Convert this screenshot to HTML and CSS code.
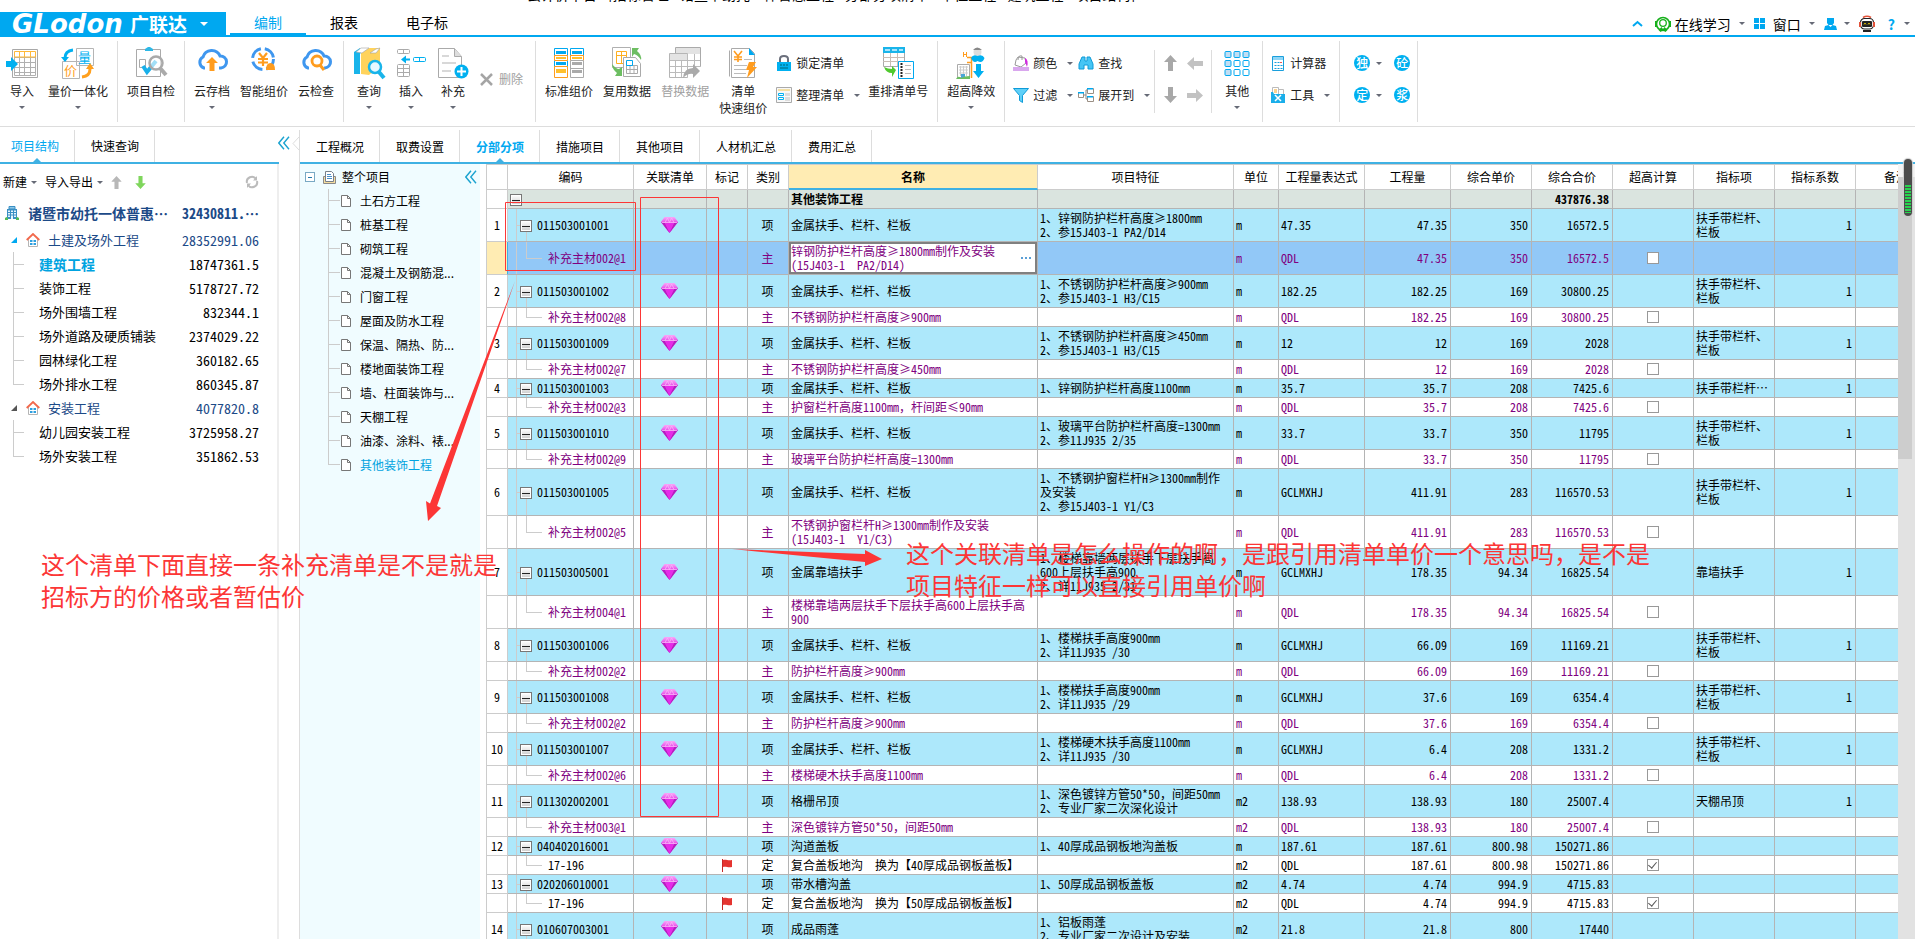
FILE: index.html
```html
<!DOCTYPE html>
<html lang="zh-CN">
<head>
<meta charset="utf-8">
<title>Glodon 广联达 - 分部分项</title>
<link rel="stylesheet" href="styles.css">
</head>
<body>
<svg class="sprite" aria-hidden="true">
<defs>
<linearGradient id="gemfill" x1="0" y1="0" x2="0" y2="1"><stop offset="0" stop-color="#f9a8f9"/><stop offset=".4" stop-color="#e63fe6"/><stop offset="1" stop-color="#dc20e6"/></linearGradient>
<symbol id="gem" viewBox="0 0 17 16"><path d="M3.500 0h10L17 5 8.500 16 0 5z" fill="url(#gemfill)"/><path d="M0 5l4 1 4.500 10zM17 5l-4 1-4.500 10z" fill="#b51fbe"/><path d="M4 6h9l-4.500 9z" fill="#e62be8"/><path d="M1 5.500h15M4 5.500L6.500 1 8.500 5.500 10.500 1 13 5.500" stroke="#f7b4f7" stroke-width=".8" fill="none"/></symbol>
<symbol id="flag" viewBox="0 0 10 13"><path d="M.5 0v13" stroke="#c62828"/><path d="M1 1c3-1 5 1 9 0v7c-4 1-6-1-9 0z" fill="#e53430"/></symbol>
<symbol id="page" viewBox="0 0 10 12"><path d="M.5.5h6l3 3v8h-9z" fill="#fff" stroke="#777"/><path d="M6.500.5v3h3" fill="none" stroke="#777"/></symbol>
<symbol id="house" viewBox="0 0 14 14"><path d="M2.500 6v7.500h9V6" fill="#fff" stroke="#b5b5b5"/><path d="M.7 7L7 1l6.300 6" fill="none" stroke="#f2694c" stroke-width="1.800"/><path d="M4 7h2.500v2H4zM7.500 7H10v2H7.500zM4 10h2.500v2H4zM7.500 10H10v2H7.500z" fill="#2d9fdf"/></symbol>
<symbol id="chev" viewBox="0 0 12 14"><path d="M6 .7L.8 7 6 13.300M11 .7L5.800 7 11 13.300" fill="none" stroke="#1ba3d0" stroke-width="1.400"/></symbol>
<symbol id="up" viewBox="0 0 13 16"><path d="M6.500 0L13 7H9v9H4V7H0z" fill="currentColor"/></symbol>
</defs>
</svg>

<header class="titlebar">
  <p class="doc-title">云计价平台 - [招标管理 - 诸暨市幼托一体普惠工程 - 分部分项清单 - 单位工程 - 建筑工程 - 项目结构]</p>
  <div class="menu">
    <button class="brand"><span class="brand-en">GLodon</span><span class="brand-cn">广联达</span><i class="caret"></i></button>
    <nav class="main-nav"><a href="#" class="on">编制</a><a href="#">报表</a><a href="#">电子标</a></nav>
    <div class="account">
      <button class="collapse" aria-label="收起"><svg width="11" height="7"><path d="M1 6l4.500-4L10 6" fill="none" stroke="#00a8f0" stroke-width="2"/></svg></button>
      <button class="study"><svg width="16" height="16" viewBox="0 0 16 16"><circle cx="8" cy="8" r="6.500" fill="none" stroke="#17b01b" stroke-width="1.600"/><path d="M0 5h2v6H0zM14 5h2v6h-2z" fill="#17b01b"/><circle cx="8" cy="7" r="3.300" fill="#fff" stroke="#17b01b" stroke-width="1.300"/><path d="M3.500 14l3-3 1.500 2 1.500-2 3 3-2 2-2.500-1.500L5.500 16z" fill="#17b01b"/></svg>在线学习<i class="caret"></i></button>
      <button class="win"><svg width="11" height="11"><path d="M0 0h5v5H0zM6 0h5v5H6zM0 6h5v5H0zM6 6h5v5H6z" fill="#00a8f0"/></svg>窗口<i class="caret"></i></button>
      <button class="user" aria-label="用户"><svg width="13" height="12" viewBox="0 0 13 12"><path d="M3 0h7v5L8.500 7h-4L3 5zM0 12l1-4 3.500-1L6.500 9l2-2L12 8l1 4z" fill="#00a8f0"/></svg><i class="caret"></i></button>
      <button class="robot" aria-label="助手"><svg width="16" height="16" viewBox="0 0 16 16"><path d="M4 1.500Q8-1 12 1.500" stroke="#e2533a" stroke-width="1.500" fill="none"/><rect x="1.500" y="2.500" width="13" height="10.500" rx="4" fill="#fff" stroke="#222" stroke-width="1.200"/><path d="M0 6h2v5H0zM14 6h2v5h-2z" fill="#e2533a"/><rect x="3" y="5" width="10" height="6" rx="1" fill="#222"/><path d="M5 8.500L6 7l1 1.500M9 8.500L10 7l1 1.500" stroke="#fd0" fill="none" stroke-width=".8"/><path d="M4 15h8" stroke="#222" stroke-width="2"/></svg></button>
      <button class="help" aria-label="帮助">?<i class="caret"></i></button>
    </div>
  </div>
</header>

<section class="ribbon" aria-label="工具栏">
  <div class="group g1">
    <button class="big"><svg width="32" height="32" viewBox="0 0 32 32"><path d="M6.500 2.500h25v28h-25z" fill="#fff" stroke="#a8a8a8"/><path d="M9 10.500h21M9 15.500h21M9 20.500h21M9 25.500h21M13.500 5v23M18.500 5v23M24.500 5v23M8.500 10v18.500h21V10" fill="none" stroke="#b0b0b0"/><path d="M8.500 10V4.500h21V10M8.500 10h21M13.500 5v5M18.500 5v5M24.500 5v5" fill="none" stroke="#ffb93a"/><path d="M0 14h5v-4l7 7-7 7v-4H0z" fill="#00b0f0"/></svg><span>导入</span><i class="caret"></i></button>
    <button class="big"><svg width="32" height="32" viewBox="0 0 32 32"><path d="M14.500 1.500h17v17h-17zM.5 14.500h17v17H.5z" fill="#fff" stroke="#b5b5b5"/><text x="16" y="15" class="ico-a">量</text><text x="2" y="28" class="ico-b">价</text><path d="M11 3Q3 4 3 11" fill="none" stroke="#00b0f0" stroke-width="3"/><path d="M-1 10h8l-4 5z" fill="#00b0f0"/><path d="M20 30q8-1 8-8" fill="none" stroke="#ffa01e" stroke-width="3"/><path d="M24 22l4-6 4 6z" fill="#ffa01e"/></svg><span>量价一体化</span><i class="caret"></i></button>
  </div>
  <div class="group">
    <button class="big"><svg width="32" height="32" viewBox="0 0 32 32"><path d="M1.500 2.500h24v27h-24z" fill="#fff" stroke="#aaa"/><path d="M10 4V2l3-2h2l3 2v2z" fill="#2db8e6"/><path d="M4.500 12.500h6v8h-6z" fill="#fff" stroke="#aaa"/><path d="M8 19l4 6 9-11" fill="none" stroke="#18b0ea" stroke-width="4"/><circle cx="21" cy="16" r="6.500" fill="#fff" fill-opacity=".6" stroke="#aaa" stroke-width="2.500"/><path d="M25 21l6 7" stroke="#aaa" stroke-width="4"/></svg><span>项目自检</span></button>
  </div>
  <div class="group">
    <button class="big"><svg width="32" height="32" viewBox="0 0 32 32"><path d="M9 21H8a6 6 0 0 1-1-11 9 9 0 0 1 17-1 6 6 0 0 1 1 12h-2" fill="none" stroke="#3f97ef" stroke-width="3"/><path d="M16 10l6 6h-3.500v8h-5v-8H10z" fill="#ff9c1e"/></svg><span>云存档</span><i class="caret"></i></button>
    <button class="big"><svg width="32" height="32" viewBox="0 0 32 32"><circle cx="15" cy="12" r="10.500" fill="none" stroke="#3f97ef" stroke-width="3" stroke-dasharray="13 4"/><path d="M11 6l4 5 4-5M15 11v8M10 12h10M10 15.500h10" fill="none" stroke="#ff9c1e" stroke-width="2.200"/><path d="M18 23q0-7 4.500-7t4.500 7z" fill="#ff9c1e"/></svg><span>智能组价</span></button>
    <button class="big"><svg width="32" height="32" viewBox="0 0 32 32"><path d="M9 21H8a6 6 0 0 1-1-11 9 9 0 0 1 17-1 6 6 0 0 1 1 12h-1" fill="none" stroke="#3f97ef" stroke-width="3"/><circle cx="17" cy="14" r="5" fill="#fff" stroke="#ff9c1e" stroke-width="2.800"/><path d="M20 18l4 5" stroke="#ff9c1e" stroke-width="3"/></svg><span>云检查</span></button>
  </div>
  <div class="group g4">
    <button class="big"><svg width="32" height="32" viewBox="0 0 32 32"><path d="M1 5l6-4 2 3-2 3v20H1z" fill="#19b4ea"/><path d="M8 6l8-5h11v24q-9 0-11 3l-8-1z" fill="#ffd35c"/><path d="M3 5l5-4h8l-7 5zM17 6l6-4 4-1-4 5z" fill="#fff" stroke="#a3a3a3" stroke-width=".6"/><circle cx="22" cy="20" r="6" fill="#e8f8ff" stroke="#19b4ea" stroke-width="2.500"/><path d="M26 25l5 6" stroke="#19b4ea" stroke-width="4"/></svg><span>查询</span><i class="caret"></i></button>
    <button class="big"><svg width="32" height="32" viewBox="0 0 32 32"><g fill="#fff" stroke="#aaa"><rect x="2.500" y="2.500" width="12" height="4" rx="1"/><path d="M8.500 3v3"/><rect x="2.500" y="17.500" width="12" height="12" rx="1"/><path d="M8.500 18v11M3 21.500h11M3 25.500h11"/></g><path d="M6 12.500l5-4v3h4v2h-4v3z" fill="#00b0f0"/><rect x="18.500" y="10.500" width="12" height="4" rx="1" fill="#fff" stroke="#00b0f0"/><path d="M24.500 11v3" stroke="#00b0f0"/></svg><span>插入</span><i class="caret"></i></button>
    <button class="big"><svg width="32" height="32" viewBox="0 0 32 32"><path d="M1.500 1.500h16l7 8v21h-23z" fill="#fff" stroke="#aaa"/><path d="M17.500 1.500v8h7" fill="#ddd" stroke="#aaa"/><path d="M5 9h7M5 16h14M5 24h9" stroke="#ccc" stroke-width="1.500"/><circle cx="24.500" cy="24.500" r="7" fill="#00b0f0"/><path d="M20 24.500h9M24.500 20v9" stroke="#fff" stroke-width="2"/></svg><span>补充</span><i class="caret"></i></button>
    <button class="small dim"><svg width="13" height="13" viewBox="0 0 13 13"><path d="M1 1l11 11M12 1L1 12" stroke="#a5a5a5" stroke-width="2.500"/></svg>删除</button>
  </div>
  <div class="group">
    <button class="big"><svg width="32" height="32" viewBox="0 0 32 32"><g fill="#fff"><path d="M1.500 1.500h13v10h-13zM17.500 1.500h13v10h-13zM1.500 13.500h13v8h-13z" stroke="#00a8f0"/><path d="M1.500 8.500h13v5h-13zM17.500 8.500h13v5h-13zM1.500 19.500h13v11h-13z" stroke="#ff9c1e"/><path d="M17.500 13.500h13v17h-13zM17.500 21.500h13" stroke="#aaa"/></g><path d="M3 4h10v3H3zM19 4h10v3H19zM3 15h10v3H3z" fill="#00a8f0"/><path d="M3 10h10v2H3zM19 10h10v2H19zM3 22h10v4H3z" fill="#ffc02e"/><path d="M19 15h10v3H19zM19 23h10v3H19z" fill="#aaa"/></svg><span>标准组价</span></button>
    <button class="big"><svg width="32" height="32" viewBox="0 0 32 32"><path d="M1.500.5h18v20h-18z" fill="#fff" stroke="#b0b0b0"/><path d="M5.500 4.500h10v12h-10zM5.500 8.500h10M10.500 4.500v12" fill="none" stroke="#ffb020"/><path d="M12.500 10.500h12l5 6v13h-17z" fill="#fff" stroke="#aaa"/><path d="M15.500 18.500h11v8h-11zM15.500 22.500h11M19 18.500v8M23 18.500v8" fill="none" stroke="#aaa"/><path d="M15.500 13.500h6v5h-6z" fill="none" stroke="#00a8f0"/><path d="M21 1h7l-2 3q5 4 4 9-3-5-7-6l-2 3zM11 29H4l2-3q-5-4-5-9 4 5 7 5l3-2z" fill="#6dbe62"/></svg><span>复用数据</span></button>
    <button class="big dim"><svg width="32" height="32" viewBox="0 0 32 32"><path d="M6.500.5h25v19h-25z" fill="#fff" stroke="#aaa"/><path d="M7 1h24v6H7z" fill="#e3e3e3"/><path d="M.5 6.500h18v24H.5z" fill="#fff" stroke="#b5b5b5"/><path d="M1 7h17v6H1z" fill="#e3e3e3"/><path d="M1 13.500h30M1 19.500h30M1 25.500h17M6.500 13v17M12.500 13v17M18.500 7v23M25.500 7v13" stroke="#bbb"/><path d="M14 31q1-10 10-10v-4l7 7-7 7v-4q-5-1-10 4z" fill="#aaa"/></svg><span>替换数据</span></button>
    <button class="big"><svg width="32" height="32" viewBox="0 0 32 32"><path d="M2.500 3.500v26M4.500 1.500h18l5 5v24h-23z" fill="#fff" stroke="#aaa"/><path d="M22 1l6 7h-6z" fill="#00a8f0"/><path d="M7 4l4 5 4-5M11 9v6M7 10h8M7 12.500h8" fill="none" stroke="#ff9c1e" stroke-width="1.600"/><path d="M17 12.500h8M7 18.500h13M7 22.500h12M7 26.500h12" stroke="#bbb"/><path d="M22 15h7l-3 5h4L20 31l2-8h-3z" fill="#ff9c1e"/></svg><span>清单<br>快速组价</span></button>
    <div class="stack tight">
      <button class="small"><svg width="16" height="16" viewBox="0 0 16 16"><path d="M4 8V4q0-3 4-3t4 3v4" fill="none" stroke="#6b6f7c" stroke-width="2"/><path d="M1 7h14v9H1z" fill="#00b0f0"/><path d="M4 10h2M7 10h2M10 10h2M4 13h8" stroke="#067" /></svg>锁定清单</button>
      <button class="small"><svg width="16" height="16" viewBox="0 0 16 16"><path d="M.5.5h15v15H.5z" fill="#f8f8f8" stroke="#aaa"/><path d="M2 2h12v2H2z" fill="#f2dfa5"/><path d="M2.500 6.500h5v2h-5zM2.500 10.500h5v2h-5z" fill="#fff" stroke="#00b0f0"/><path d="M9 6h5v3H9zM9 10h5v4H9z" fill="#ddd"/></svg>整理清单<i class="caret"></i></button>
    </div>
    <button class="big"><svg width="32" height="32" viewBox="0 0 32 32"><path d="M1.500.5h21v19h-21z" fill="#fff" stroke="#aaa"/><path d="M1 0h22v6H1z" fill="#19b4ea"/><path d="M3 2h5v2H3zM10 2h5v2h-5zM17 2h4v2h-4z" fill="#a9e3fa"/><path d="M1 10.500h21M1 14.500h21M8.500 6v13M15.500 6v13" stroke="#c9bdb5"/><path d="M2 20q2 6 8 6v4l4-7-4-4v3q-4 0-8-2z" fill="#4fc92e"/><path d="M16.500 14.500h15v17h-15z" fill="#fff" stroke="#00a8f0"/><path d="M19.500 16v14" stroke="#222" stroke-width="2" stroke-dasharray="2 1"/><path d="M23 18.500h6M23 22.500h6M23 26.500h6" stroke="#bbb"/></svg><span>重排清单号</span></button>
  </div>
  <div class="group">
    <button class="big"><svg width="32" height="32" viewBox="0 0 32 32"><path d="M2.500 17.500h12v13h-12z" fill="#fff" stroke="#aaa"/><path d="M4 20h9M4 23h9M4 26h9M5.500 19v10M8.500 19v10M11.500 19v10" stroke="#ccc"/><path d="M6 27h4v4H6z" fill="#4aa5d8"/><path d="M1 32q2-4 5-1 3-2 9-2v3z" fill="#6dbe62"/><path d="M16.500 10v21M12 10.500h5M12 15.500h5" stroke="#ff9c1e" stroke-width="1.500"/><path d="M8.500 5v5M11.500 5v5M8.500 7.500h3" stroke="#ff9c1e"/><circle cx="22.500" cy="5" r="4" fill="#ddd"/><path d="M18 3q4-5 9 0z" fill="#888"/><path d="M16 11q2-4 6.500-2 5-2 7 2-2 6-7 3-4 3-6.500-3zM21 17h5v7h3l-5.500 7L18 24h3z" fill="#00b0f0"/></svg><span>超高降效</span><i class="caret"></i></button>
  </div>
  <div class="group short g7">
    <div class="stack">
      <button class="small"><svg width="16" height="16" viewBox="0 0 16 16"><path d="M5 2l7 1 1 5-5 4-6-2 1-5z" fill="#fff" stroke="#999"/><path d="M5 5Q5 0 9 1v4" fill="none" stroke="#999"/><path d="M12 3q4 2 2 9l-2-5z" fill="#d12ce0"/><path d="M0 12h16v4H0z" fill="#d9a7ee"/></svg>颜色<i class="caret"></i></button>
      <button class="small"><svg width="16" height="16" viewBox="0 0 16 16"><path d="M.5 1.500h15l-6 7v7l-3-2v-5z" fill="#5fd0f8" stroke="#0e9bd8"/></svg>过滤<i class="caret"></i></button>
    </div>
    <div class="stack">
      <button class="small"><svg width="16" height="16" viewBox="0 0 16 16"><path d="M4 2h3v4h2V2h3l3 7v5h-5v-4H6v4H1V9z" fill="#46c5f5" stroke="#0e9bd8"/></svg>查找</button>
      <button class="small"><svg width="16" height="16" viewBox="0 0 16 16"><path d="M5 8h3M8 3v9M8 3h2M8 12h2" fill="none" stroke="#888"/><path d="M.5 5.500h5v5h-5zM9.500 1.500h6v5h-6zM9.500 9.500h6v5h-6z" fill="#fff" stroke="#9a8f84"/><path d="M0 5h6v1.500H0zM9 1h6v1.500H9zM9 9h6v1.500H9z" fill="#00a8f0"/></svg>展开到<i class="caret"></i></button>
    </div>
  </div>
  <div class="group short arrows">
    <button aria-label="上移"><svg width="13" height="16"><use href="#up"/></svg></button><button aria-label="升级" class="lite"><svg width="16" height="13" viewBox="0 0 16 13"><path d="M0 6.500L7 0v4h9v5H7v4z" fill="currentColor"/></svg></button>
    <button aria-label="下移"><svg width="13" height="16" viewBox="0 0 13 16"><path d="M6.500 16L13 9H9V0H4v9H0z" fill="currentColor"/></svg></button><button aria-label="降级" class="lite"><svg width="16" height="13" viewBox="0 0 16 13"><path d="M16 6.500L9 0v4H0v5h9v4z" fill="currentColor"/></svg></button>
  </div>
  <div class="group">
    <button class="big"><svg width="32" height="32" viewBox="0 0 32 32"><g stroke="#00a8f0" fill="#c2def3"><rect x="4" y="4.500" width="6" height="6" rx="1"/><rect x="13" y="4.500" width="6" height="6" rx="1"/><rect x="22" y="4.500" width="6" height="6" rx="1"/><rect x="4" y="13.500" width="6" height="6" rx="1"/><rect x="4" y="22.500" width="6" height="6" rx="1"/></g><g stroke="#00a8f0" fill="#fff"><rect x="13" y="13.500" width="6" height="6" rx="1"/><rect x="22" y="13.500" width="6" height="6" rx="1"/><rect x="13" y="22.500" width="6" height="6" rx="1"/><rect x="22" y="22.500" width="6" height="6" rx="1"/></g></svg><span>其他</span><i class="caret"></i></button>
  </div>
  <div class="group g10">
    <div class="stack">
      <button class="small"><svg width="16" height="16" viewBox="0 0 16 16"><path d="M2.500 1.500h11v14h-11z" fill="#fff" stroke="#1a9fdc"/><path d="M3 2h10v3H3z" fill="#8fd6f7"/><path d="M4.500 7.500h2M7.500 7.500h2M4.500 10.500h2M7.500 10.500h2M4.500 13.500h2M7.500 13.500h2M10.500 10.500h2M10.500 13.500h2" stroke="#1a9fdc"/><path d="M10 7.500h2" stroke="#e55"/></svg>计算器</button>
      <button class="small"><svg width="16" height="16" viewBox="0 0 16 16"><path d="M2.500 8V.5h6V8M8.500 2.500h5V8" fill="#fff" stroke="#bbb"/><path d="M4 3h3M4 5h3" stroke="#f5a623"/><path d="M1 5h2l1 2h11v9H1z" fill="#1aaeea"/><path d="M5 8l6 6M11 8l-6 6" stroke="#fff" stroke-width="1.500"/></svg>工具<i class="caret"></i></button>
    </div>
  </div>
  <div class="group g11">
    <div class="stack">
      <button class="small"><b class="dot">独</b><i class="caret"></i></button>
      <button class="small"><b class="dot">定</b><i class="caret"></i></button>
    </div>
    <div class="stack">
      <button class="small"><b class="dot">砼</b></button>
      <button class="small"><b class="dot">浆</b></button>
    </div>
  </div>
</section>

<div class="workspace">
  <aside class="project">
    <nav class="tabs"><a href="#" class="on">项目结构</a><a href="#">快速查询</a></nav>
    <div class="project-body">
      <div class="tools">
        <button>新建<i class="caret"></i></button><button>导入导出<i class="caret"></i></button>
        <button class="t-up" aria-label="上移"><svg width="11" height="13" viewBox="0 0 13 16"><use href="#up"/></svg></button>
        <button class="t-down" aria-label="下移"><svg width="11" height="13" viewBox="0 0 13 16"><path d="M6.500 16L13 9H9V0H4v9H0z" fill="currentColor"/></svg></button>
        <button class="t-refresh" aria-label="刷新"><svg width="14" height="14" viewBox="0 0 14 14"><path d="M2 8a5 5 0 0 1 9-4M12 6a5 5 0 0 1-9 4" fill="none" stroke="#bbb" stroke-width="2"/><path d="M12 1v4.500H8zM2 13V8.500h4z" fill="#bbb"/></svg></button>
      </div>
      <ul class="ptree">
        <li class="root"><svg width="14" height="14" viewBox="0 0 14 14"><path d="M2 3h10v10H2z" fill="#3a8fc4"/><path d="M4 .5h6V3H4z" fill="#8cc8e8" stroke="#3a8fc4"/><path d="M3 4.500h2v1.500H3zM6 4.500h2v1.500H6zM9 4.500h2v1.500H9zM3 7h2v1.500H3zM6 7h2v1.500H6zM9 7h2v1.500H9zM3 9.500h2V11H3zM6 9.500h2V13H6zM9 9.500h2V11H9z" fill="#e6f6fe"/><path d="M0 14v-2l1.500-1L3 12v2zM11 14v-2l1.500-1L14 12v2z" fill="#5b5"/></svg><span>诸暨市幼托一体普惠…</span><em>32430811.…</em></li>
        <li class="branch"><i class="tri open"></i><svg width="14" height="14"><use href="#house"/></svg><span>土建及场外工程</span><em>28352991.06</em></li>
        <li class="leaf on"><span>建筑工程</span><em>18747361.5</em></li>
        <li class="leaf"><span>装饰工程</span><em>5178727.72</em></li>
        <li class="leaf"><span>场外围墙工程</span><em>832344.1</em></li>
        <li class="leaf"><span>场外道路及硬质铺装</span><em>2374029.22</em></li>
        <li class="leaf"><span>园林绿化工程</span><em>360182.65</em></li>
        <li class="leaf last"><span>场外排水工程</span><em>860345.87</em></li>
        <li class="branch"><i class="tri"></i><svg width="14" height="14"><use href="#house"/></svg><span>安装工程</span><em>4077820.8</em></li>
        <li class="leaf"><span>幼儿园安装工程</span><em>3725958.27</em></li>
        <li class="leaf last"><span>场外安装工程</span><em>351862.53</em></li>
      </ul>
    </div>
  </aside>
  <button class="fold" aria-label="收起项目结构"><svg width="12" height="14"><use href="#chev"/></svg><svg width="7" height="13"><path d="M7 0L1 6.500 7 13" fill="#fff" stroke="#ddd"/></svg></button>

  <main class="main">
    <nav class="tabs"><a href="#">工程概况</a><a href="#">取费设置</a><a href="#" class="on bold">分部分项</a><a href="#">措施项目</a><a href="#">其他项目</a><a href="#">人材机汇总</a><a href="#">费用汇总</a></nav>
    <div class="content">
      <div class="outline">
        <div class="oroot"><button class="obox" aria-label="折叠"></button><svg width="13" height="13" viewBox="0 0 13 13"><path d="M.5 5.500h12v7H.5z" fill="#f5dea0" stroke="#8a8a8a"/><path d="M2.500.5h6l2 2v8h-8z" fill="#fff" stroke="#77808a"/><path d="M4 3.500h4M4 5.500h5M4 7.500h5" stroke="#4a90c8"/></svg><span>整个项目</span><button class="ofold" aria-label="收起"><svg width="12" height="14"><use href="#chev"/></svg></button></div>
        <ul class="otree">
          <li><svg width="10" height="12"><use href="#page"/></svg>土石方工程</li>
          <li><svg width="10" height="12"><use href="#page"/></svg>桩基工程</li>
          <li><svg width="10" height="12"><use href="#page"/></svg>砌筑工程</li>
          <li><svg width="10" height="12"><use href="#page"/></svg>混凝土及钢筋混...</li>
          <li><svg width="10" height="12"><use href="#page"/></svg>门窗工程</li>
          <li><svg width="10" height="12"><use href="#page"/></svg>屋面及防水工程</li>
          <li><svg width="10" height="12"><use href="#page"/></svg>保温、隔热、防...</li>
          <li><svg width="10" height="12"><use href="#page"/></svg>楼地面装饰工程</li>
          <li><svg width="10" height="12"><use href="#page"/></svg>墙、柱面装饰与...</li>
          <li><svg width="10" height="12"><use href="#page"/></svg>天棚工程</li>
          <li><svg width="10" height="12"><use href="#page"/></svg>油漆、涂料、裱...</li>
          <li class="on"><svg width="10" height="12"><use href="#page"/></svg>其他装饰工程</li>
        </ul>
      </div>
      <div class="grid-wrap">
        <table class="grid">
          <colgroup><col class="c-no"><col class="c-code"><col class="c-link"><col class="c-tag"><col class="c-tag"><col class="c-name"><col class="c-feat"><col class="c-unit"><col class="c-qty"><col class="c-qty"><col class="c-std"><col class="c-std"><col class="c-std"><col class="c-std"><col class="c-std"><col class="c-std"></colgroup>
          <thead><tr><th></th><th>编码</th><th>关联清单</th><th>标记</th><th>类别</th><th class="on">名称</th><th>项目特征</th><th>单位</th><th>工程量表达式</th><th>工程量</th><th>综合单价</th><th>综合合价</th><th>超高计算</th><th>指标项</th><th>指标系数</th><th>备注</th></tr></thead>
          <tbody>
          <tr class="sum"><td><td><button class="box" aria-label="折叠"></button><td><td><td><td>其他装饰工程<td><td><td><td><td><td>437876.38<td><td><td><td></tr>
          <tr class="item"><td>1<td><button class="box" aria-label="折叠"></button>011503001001<td><svg width="17" height="16"><use href="#gem"/></svg><td><td>项<td>金属扶手、栏杆、栏板<td>1、锌钢防护栏杆高度≥1800mm<br>2、参15J403-1 PA2/D14<td>m<td>47.35<td>47.35<td>350<td>16572.5<td><td>扶手带栏杆、<br>栏板<td>1<td></tr>
          <tr class="sub sel"><td><td>补充主材002@1<td><td><td>主<td><div class="edit"><span>锌钢防护栏杆高度≥1800mm制作及安装<br>(15J403-1&nbsp; PA2/D14)</span><button aria-label="更多"><svg width="11" height="2"><path d="M0 0h2v2H0zM4 0h2v2H4zM8 0h2v2H8z" fill="#5a9fd6"/></svg></button></div><td><td>m<td>QDL<td>47.35<td>350<td>16572.5<td><input type="checkbox" aria-label="超高计算"><td><td><td></tr>
          <tr class="item"><td>2<td><button class="box" aria-label="折叠"></button>011503001002<td><svg width="17" height="16"><use href="#gem"/></svg><td><td>项<td>金属扶手、栏杆、栏板<td>1、不锈钢防护栏杆高度≥900mm<br>2、参15J403-1 H3/C15<td>m<td>182.25<td>182.25<td>169<td>30800.25<td><td>扶手带栏杆、<br>栏板<td>1<td></tr>
          <tr class="sub"><td><td>补充主材002@8<td><td><td>主<td>不锈钢防护栏杆高度≥900mm<td><td>m<td>QDL<td>182.25<td>169<td>30800.25<td><input type="checkbox" aria-label="超高计算"><td><td><td></tr>
          <tr class="item"><td>3<td><button class="box" aria-label="折叠"></button>011503001009<td><svg width="17" height="16"><use href="#gem"/></svg><td><td>项<td>金属扶手、栏杆、栏板<td>1、不锈钢防护栏杆高度≥450mm<br>2、参15J403-1 H3/C15<td>m<td>12<td>12<td>169<td>2028<td><td>扶手带栏杆、<br>栏板<td>1<td></tr>
          <tr class="sub"><td><td>补充主材002@7<td><td><td>主<td>不锈钢防护栏杆高度≥450mm<td><td>m<td>QDL<td>12<td>169<td>2028<td><input type="checkbox" aria-label="超高计算"><td><td><td></tr>
          <tr class="item"><td>4<td><button class="box" aria-label="折叠"></button>011503001003<td><svg width="17" height="16"><use href="#gem"/></svg><td><td>项<td>金属扶手、栏杆、栏板<td>1、锌钢防护栏杆高度1100mm<td>m<td>35.7<td>35.7<td>208<td>7425.6<td><td>扶手带栏杆…<td>1<td></tr>
          <tr class="sub"><td><td>补充主材002@3<td><td><td>主<td>护窗栏杆高度1100mm，杆间距≤90mm<td><td>m<td>QDL<td>35.7<td>208<td>7425.6<td><input type="checkbox" aria-label="超高计算"><td><td><td></tr>
          <tr class="item"><td>5<td><button class="box" aria-label="折叠"></button>011503001010<td><svg width="17" height="16"><use href="#gem"/></svg><td><td>项<td>金属扶手、栏杆、栏板<td>1、玻璃平台防护栏杆高度=1300mm<br>2、参11J935 2/35<td>m<td>33.7<td>33.7<td>350<td>11795<td><td>扶手带栏杆、<br>栏板<td>1<td></tr>
          <tr class="sub"><td><td>补充主材002@9<td><td><td>主<td>玻璃平台防护栏杆高度=1300mm<td><td>m<td>QDL<td>33.7<td>350<td>11795<td><input type="checkbox" aria-label="超高计算"><td><td><td></tr>
          <tr class="item"><td>6<td><button class="box" aria-label="折叠"></button>011503001005<td><svg width="17" height="16"><use href="#gem"/></svg><td><td>项<td>金属扶手、栏杆、栏板<td>1、不锈钢护窗栏杆H≥1300mm制作<br>及安装<br>2、参15J403-1 Y1/C3<td>m<td>GCLMXHJ<td>411.91<td>283<td>116570.53<td><td>扶手带栏杆、<br>栏板<td>1<td></tr>
          <tr class="sub"><td><td>补充主材002@5<td><td><td>主<td>不锈钢护窗栏杆H≥1300mm制作及安装<br>(15J403-1&nbsp; Y1/C3)<td><td>m<td>QDL<td>411.91<td>283<td>116570.53<td><input type="checkbox" aria-label="超高计算"><td><td><td></tr>
          <tr class="item"><td>7<td><button class="box" aria-label="折叠"></button>011503005001<td><svg width="17" height="16"><use href="#gem"/></svg><td><td>项<td>金属靠墙扶手<td>1、楼梯靠墙两层扶手下层扶手高<br>600上层扶手高900<br>2、详11J935 2/31<td>m<td>GCLMXHJ<td>178.35<td>94.34<td>16825.54<td><td>靠墙扶手<td>1<td></tr>
          <tr class="sub"><td><td>补充主材004@1<td><td><td>主<td>楼梯靠墙两层扶手下层扶手高600上层扶手高<br>900<td><td>m<td>QDL<td>178.35<td>94.34<td>16825.54<td><input type="checkbox" aria-label="超高计算"><td><td><td></tr>
          <tr class="item"><td>8<td><button class="box" aria-label="折叠"></button>011503001006<td><svg width="17" height="16"><use href="#gem"/></svg><td><td>项<td>金属扶手、栏杆、栏板<td>1、楼梯扶手高度900mm<br>2、详11J935 /30<td>m<td>GCLMXHJ<td>66.09<td>169<td>11169.21<td><td>扶手带栏杆、<br>栏板<td>1<td></tr>
          <tr class="sub"><td><td>补充主材002@2<td><td><td>主<td>防护栏杆高度≥900mm<td><td>m<td>QDL<td>66.09<td>169<td>11169.21<td><input type="checkbox" aria-label="超高计算"><td><td><td></tr>
          <tr class="item"><td>9<td><button class="box" aria-label="折叠"></button>011503001008<td><svg width="17" height="16"><use href="#gem"/></svg><td><td>项<td>金属扶手、栏杆、栏板<td>1、楼梯扶手高度900mm<br>2、详11J935 /29<td>m<td>GCLMXHJ<td>37.6<td>169<td>6354.4<td><td>扶手带栏杆、<br>栏板<td>1<td></tr>
          <tr class="sub"><td><td>补充主材002@2<td><td><td>主<td>防护栏杆高度≥900mm<td><td>m<td>QDL<td>37.6<td>169<td>6354.4<td><input type="checkbox" aria-label="超高计算"><td><td><td></tr>
          <tr class="item"><td>10<td><button class="box" aria-label="折叠"></button>011503001007<td><svg width="17" height="16"><use href="#gem"/></svg><td><td>项<td>金属扶手、栏杆、栏板<td>1、楼梯硬木扶手高度1100mm<br>2、详11J935 /30<td>m<td>GCLMXHJ<td>6.4<td>208<td>1331.2<td><td>扶手带栏杆、<br>栏板<td>1<td></tr>
          <tr class="sub"><td><td>补充主材002@6<td><td><td>主<td>楼梯硬木扶手高度1100mm<td><td>m<td>QDL<td>6.4<td>208<td>1331.2<td><input type="checkbox" aria-label="超高计算"><td><td><td></tr>
          <tr class="item"><td>11<td><button class="box" aria-label="折叠"></button>011302002001<td><svg width="17" height="16"><use href="#gem"/></svg><td><td>项<td>格栅吊顶<td>1、深色镀锌方管50*50，间距50mm<br>2、专业厂家二次深化设计<td>m2<td>138.93<td>138.93<td>180<td>25007.4<td><td>天棚吊顶<td>1<td></tr>
          <tr class="sub"><td><td>补充主材003@1<td><td><td>主<td>深色镀锌方管50*50，间距50mm<td><td>m2<td>QDL<td>138.93<td>180<td>25007.4<td><input type="checkbox" aria-label="超高计算"><td><td><td></tr>
          <tr class="item"><td>12<td><button class="box" aria-label="折叠"></button>040402016001<td><svg width="17" height="16"><use href="#gem"/></svg><td><td>项<td>沟道盖板<td>1、40厚成品钢板地沟盖板<td>m<td>187.61<td>187.61<td>800.98<td>150271.86<td><td><td><td></tr>
          <tr class="sub quota"><td><td>17-196<td><td><svg width="10" height="13"><use href="#flag"/></svg><td>定<td>复合盖板地沟&emsp;换为【40厚成品钢板盖板】<td><td>m2<td>QDL<td>187.61<td>800.98<td>150271.86<td><input type="checkbox" aria-label="超高计算" checked><td><td><td></tr>
          <tr class="item"><td>13<td><button class="box" aria-label="折叠"></button>020206010001<td><svg width="17" height="16"><use href="#gem"/></svg><td><td>项<td>带水槽沟盖<td>1、50厚成品钢板盖板<td>m2<td>4.74<td>4.74<td>994.9<td>4715.83<td><td><td><td></tr>
          <tr class="sub quota"><td><td>17-196<td><td><svg width="10" height="13"><use href="#flag"/></svg><td>定<td>复合盖板地沟&emsp;换为【50厚成品钢板盖板】<td><td>m2<td>QDL<td>4.74<td>994.9<td>4715.83<td><input type="checkbox" aria-label="超高计算" checked><td><td><td></tr>
          <tr class="item"><td>14<td><button class="box" aria-label="折叠"></button>010607003001<td><svg width="17" height="16"><use href="#gem"/></svg><td><td>项<td>成品雨蓬<td>1、铝板雨蓬<br>2、专业厂家二次设计及安装<td>m2<td>21.8<td>21.8<td>800<td>17440<td><td><td><td></tr>
          </tbody>
        </table>
      </div>
      <div class="scrollbar"><button aria-label="向上滚动"><svg width="8" height="4"><path d="M0 4l4-4 4 4z" fill="#555"/></svg></button><div class="thumb"></div></div>
    </div>
  </main>
</div>

<div class="meter"><i></i></div>
<svg class="marks" aria-hidden="true"><path d="M505.500 202.500h130v68h-130zM640.500 197.500h78v619h-78z" fill="none" stroke="#fc3636"/><path d="M515 281L437 506l4 2-13 13-2-20 4 2.500zM732 549l133 5v-4l17 9-17 7v-4z" fill="#fc3636"/></svg>
<p class="note note-a">这个清单下面直接一条补充清单是不是就是<br>招标方的价格或者暂估价</p>
<p class="note note-b">这个关联清单是怎么操作的啊，是跟引用清单单价一个意思吗，是不是<br>项目特征一样可以直接引用单价啊</p>
</body>
</html>
```

FILE: styles.css
```css
* { box-sizing: border-box; }
body { margin: 0; height: 100vh; overflow: hidden; display: flex; flex-direction: column; background: #fff; color: #000; font: 12px/16px "Noto Sans CJK SC", sans-serif; position: relative; }
button { border: 0; padding: 0; background: none; font: inherit; color: inherit; display: flex; align-items: center; white-space: nowrap; }
a { color: inherit; text-decoration: none; }
ul { list-style: none; margin: 0; padding: 0; }
svg { display: block; flex: none; overflow: visible; }
.sprite { position: absolute; width: 0; height: 0; }
.caret { flex: none; width: 0; height: 0; border: 3px solid transparent; border-top-color: #666a76; border-bottom: 0; }

/* title bar */
.titlebar { flex: none; border-bottom: 2px solid #00a8f0; }
.doc-title { margin: -10px 0 0; height: 22px; padding: 0 0 10px 527px; line-height: 15px; display: flex; align-items: flex-end; overflow: hidden; font-size: 14px; white-space: nowrap; clip-path: inset(0 0 10px 0); }
.menu { display: flex; height: 23px; }
.brand { width: 226px; height: 24px; padding-left: 12px; background: #00a8f0; color: #fff; flex: none; text-align: left; }
.brand-en { font: italic 700 26px/22px "DejaVu Sans", sans-serif; width: 118px; }
.brand-cn { font-size: 19px; font-weight: 700; line-height: 22px; width: 70px; }
.brand .caret { border-width: 4px; border-bottom: 0; border-top-color: #fff; }
.main-nav { display: flex; padding-left: 4px; font-size: 14px; line-height: 20px; }
.main-nav a { width: 76px; text-align: center; height: 25px; }
.main-nav a:last-child { width: 90px; }
.main-nav .on { color: #00a8f0; border-bottom: 4px solid #00a8f0; }
.account { margin-left: auto; padding-right: 5px; display: flex; gap: 9px; align-items: center; font-size: 14px; }
.collapse { margin-right: 3px; }
.study, .win { gap: 8px; }
.user { gap: 7px; }
.study svg { margin-right: -4px; }
.robot { margin-right: 4px; }
.help { gap: 9px; color: #00a8f0; font-weight: 700; }

/* ribbon */
.ribbon { flex: none; display: flex; height: 90px; border-bottom: 1px solid #ddd; color: #222; }
.group { display: flex; gap: 10px; padding: 10px 9px 0; position: relative; border-right: 1px solid transparent; border-image: linear-gradient(#fff 5px, #ddd 5px, #ddd 84px, #fff 84px) 1; }
.group.short { border-image: linear-gradient(#fff 14px, #ddd 14px, #ddd 75px, #fff 75px) 1; }
.g1 { padding-left: 6px; }
.g4 { padding-right: 12px; }
.big { flex-direction: column; min-width: 32px; height: 75px; text-align: center; line-height: 17px; }
.big span { margin: 3px 0 7px; }
.small { gap: 4px; height: 16px; }
.group > .small { margin: 24px 0 0 1px; gap: 6px; }
.dim { color: #a0a0a0; }
.stack { display: flex; flex-direction: column; gap: 16px; padding-top: 8px; margin-left: -1px; }
.stack.tight { margin-right: -2px; }
.stack .caret { margin-left: 6px; }
.g7 { padding-right: 4px; gap: 6px; }
.arrows { display: grid; grid-template-columns: 13px 16px; gap: 16px 10px; padding: 18px 8px 25px 9px; color: #a8a8a8; }
.lite { color: #c2c2c2; }
.g10 { width: 77px; padding-left: 8px; }
.g11 { width: 78px; padding-left: 15px; gap: 13px; }
.g11 .caret { margin-left: 2px; }
.dot { width: 16px; height: 16px; border-radius: 8px; background: #00b0f0; color: #fff; font-size: 12px; font-weight: 500; line-height: 15px; text-align: center; }
.ico-a { font-size: 13px; fill: #00b0f0; }
.ico-b { font-size: 13px; fill: #ffa01e; }

/* panels */
.workspace { flex: 1; min-height: 0; display: flex; padding-top: 3px; }
.tabs { display: flex; height: 34px; border-bottom: 2px solid #3fb1e3; }
.tabs a { padding: 0 15px 0 16px; border-right: 1px solid #ddd; line-height: 34px; height: 32px; position: relative; }
.tabs .on { color: #00a8f0; }
.tabs .on::after { content: ""; position: absolute; left: 50%; bottom: 0; margin-left: -4px; border: 4px solid transparent; border-top: 0; border-bottom-color: #3fb1e3; }
.tabs .bold { font-weight: 700; }
.project { width: 279px; flex: none; display: flex; flex-direction: column; }
.project .tabs a { line-height: 32px; }
.project .tabs a:first-child { padding-left: 11px; }
.project-body { flex: 1; border-right: 2px solid #eee; padding: 7px 18px 0 3px; }
.tools { display: flex; align-items: center; height: 22px; gap: 8px; }
.tools button { gap: 4px; }
.t-up { color: #b8b8b8; }
.t-down { color: #7fd65c; margin-left: 5px; }
.t-refresh { margin-left: auto; }
.ptree { font-size: 13px; color: #000; }
.ptree li { display: flex; align-items: center; height: 24px; }
.ptree em { margin-left: auto; font: 14px "Noto Sans Mono CJK SC", "Noto Sans CJK SC", sans-serif; }
.ptree .root { height: 30px; padding: 8px 0 2px 2px; margin: 2px 0 3px; gap: 9px; font-size: 14px; font-weight: 700; color: #1c4a87; }
.ptree .root em { font-weight: 700; }
.branch { color: #1c4a87; padding-left: 8px; }
.branch svg { margin: 0 8px 0 9px; }
.branch em { color: #1c4a87; }
.tri { border: 3px solid #555; border-top-color: transparent; border-left-color: transparent; }
.tri.open { border-right-color: #00a8f0; border-bottom-color: #00a8f0; }
.leaf { padding-left: 36px; background: linear-gradient(#ccc, #ccc) 10px 0 / 1px 100% no-repeat, linear-gradient(#ccc, #ccc) 10px 12px / 11px 1px no-repeat; }
.leaf.last { background-size: 1px 12px, 11px 1px; }
.leaf.on span { color: #00a3e0; font-weight: 700; font-size: 14px; }
.fold { width: 20px; flex: none; align-self: flex-start; height: 26px; gap: 2px; justify-content: flex-end; }
.main { flex: 1; min-width: 0; display: flex; flex-direction: column; border-left: 1px solid #ddd; }
.content { flex: 1; min-height: 0; display: flex; }
.outline { width: 180px; flex: none; background: #f0fcff; padding-top: 1px; }
.oroot { display: flex; align-items: center; height: 24px; padding: 0 3px 0 5px; }
.oroot span { margin-left: 6px; }
.oroot svg { margin-left: 8px; }
.oroot .ofold { margin-left: auto; }
.oroot .ofold svg { margin-left: 0; }
.obox { width: 10px; height: 10px; border: 1px solid #79a9c4; background: linear-gradient(#27a, #27a) center / 4px 1px no-repeat #fff; }
.otree { padding-left: 28px; }
.otree li { display: flex; align-items: center; gap: 9px; height: 24px; padding-left: 13px; white-space: nowrap; background: linear-gradient(#ccc, #ccc) 0 0 / 1px 100% no-repeat, linear-gradient(#ccc, #ccc) 0 11px / 12px 1px no-repeat; }
.otree .on { color: #00a3e0; background-size: 1px 11px, 12px 1px; }

/* bill grid */
.grid-wrap { flex: 1; min-width: 0; overflow: hidden; margin-left: 6px; border-left: 1px solid #ccc; border-top: 1px solid #ccc; }
.grid { table-layout: fixed; border-collapse: separate; border-spacing: 0; width: 1450px; font: 12px/14px "Noto Sans Mono CJK SC", "Noto Sans CJK SC", monospace; }
.c-no { width: 21px; } .c-code { width: 126px; } .c-link { width: 73px; } .c-tag { width: 41px; } .c-name { width: 249px; } .c-feat { width: 196px; } .c-unit { width: 45px; } .c-qty { width: 86px; } .c-std { width: 81px; }
.grid th { height: 25px; padding: 0; border: solid #ccc; border-width: 0 1px 1px 0; font: 12px/16px "Noto Sans CJK SC", sans-serif; white-space: nowrap; }
.grid th.on { background: #ffecb3; border-bottom: 2px solid #3fb1e3; font-weight: 700; }
.grid td { height: 19px; padding: 2px 3px 2px 2px; border: solid #b4b4b4; border-width: 0 1px 1px 0; white-space: nowrap; overflow: hidden; vertical-align: middle; }
.grid td svg { margin: -1px auto; }
.grid td:nth-child(1) { background: #fff; border-color: #ccc; padding: 0; color: #000; }
.grid td:nth-child(1), .grid td:nth-child(3), .grid td:nth-child(4), .grid td:nth-child(5), .grid td:nth-child(13) { text-align: center; }
.grid td:nth-child(n+10):nth-child(-n+12), .grid td:nth-child(15) { text-align: right; }
.item td { background: #ade8fb; }
.sum td { background: #dae4df; font-weight: 700; }
.sub { color: #800080; }
.quota { color: #000; }
.sel td { background: #92c8f7; }
.grid .sel td:nth-child(1) { background: #ffecb3; border-right-color: #3fb1e3; }
.grid .sel td:nth-child(6) { padding: 0; background: #fff; }
.grid td:nth-child(2) { background-image: linear-gradient(#ccc, #ccc), linear-gradient(#ccc, #ccc), linear-gradient(#ccc, #ccc); background-repeat: no-repeat; background-position: 8px 0, 18px 0, 18px 50%; background-size: 1px 100%, 1px 50%, 16px 1px; padding-left: 40px; }
.grid .item td:nth-child(2) { background-position: 8px 0, 18px 100%, 8px 50%; background-size: 1px 100%, 1px 50%, 4px 1px; padding-left: 12px; }
.grid .sum td:nth-child(2) { background-image: none; padding-left: 2px; }
.box { display: inline-block; vertical-align: -1px; width: 12px; height: 12px; margin-right: 5px; border: 1px solid #777; box-shadow: inset 0 0 0 1px #fff; background: linear-gradient(#222, #222) center / 8px 1px no-repeat, linear-gradient(#fff, #ccc); }
.edit { display: flex; align-items: center; justify-content: space-between; height: 32px; padding: 0 3px 0 0; border: 2px solid #808080; }
.grid .edit svg { margin: 0; }
.grid input { appearance: none; display: block; margin: 0 auto; width: 12px; height: 12px; border: 1px solid #999; background: #fff; }
.grid input:checked::after { content: ""; display: block; width: 4px; height: 7px; margin: 0 auto; border: solid #555; border-width: 0 1px 1px 0; transform: rotate(40deg); }
.scrollbar { width: 17px; flex: none; background: #e2e2e2; display: flex; flex-direction: column; }
.scrollbar button { height: 13px; justify-content: center; background: #f4f4f4; }
.thumb { height: 282px; background: #cdcdcd; margin-right: 3px; }

/* floating overlay */
.meter { position: absolute; right: 3px; top: 159px; width: 8px; height: 57px; border-radius: 4px; background: #4c4c4c; padding: 26px 1px 3px; box-shadow: 0 0 1px 1px #ccc; }
.meter i { display: block; height: 28px; background: repeating-linear-gradient(#27d34f 0 2px, #4c4c4c 2px 3px); }
.marks { position: absolute; inset: 0; width: 100%; height: 100%; pointer-events: none; }
.note { position: absolute; margin: 0; font-size: 24px; line-height: 32px; color: #fc3636; white-space: nowrap; pointer-events: none; }
.note-a { left: 41px; top: 548px; }
.note-b { left: 906px; top: 537px; }
```
